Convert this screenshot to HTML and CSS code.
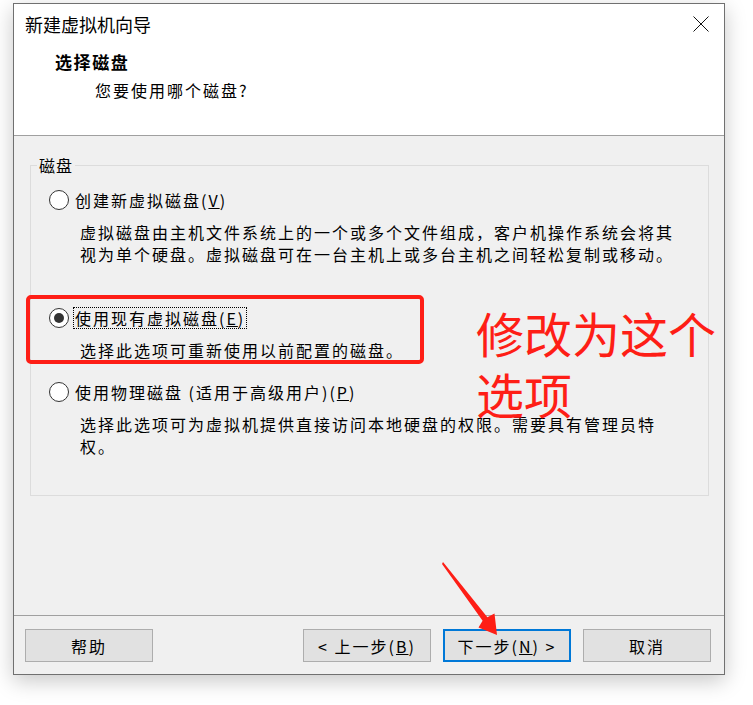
FILE: index.html
```html
<!DOCTYPE html>
<html lang="zh-CN">
<head>
<meta charset="utf-8">
<title>新建虚拟机向导</title>
<link rel="stylesheet" href="styles.css">
</head>
<body>
<div class="window">
  <header class="header">
    <div class="titlebar">
      <span class="title">新建虚拟机向导</span>
      <svg class="close" width="16" height="16" viewBox="0 0 16 16"><path d="M0.5 0.5L15.5 15.5M15.5 0.5L0.5 15.5" stroke="#111" stroke-width="1" fill="none"/></svg>
    </div>
    <div class="heading">选择磁盘</div>
    <div class="subheading">您要使用哪个磁盘?</div>
  </header>
  <main class="content">
    <fieldset class="group">
      <legend>磁盘</legend>
      <div class="option">
        <div class="row"><span class="radio"></span><span class="label">创建新虚拟磁盘(<u>V</u>)</span></div>
        <p class="desc">虚拟磁盘由主机文件系统上的一个或多个文件组成，客户机操作系统会将其视为单个硬盘。虚拟磁盘可在一台主机上或多台主机之间轻松复制或移动。</p>
      </div>
      <div class="option option-second">
        <div class="row"><span class="radio checked"></span><span class="label focused">使用现有虚拟磁盘(<u>E</u>)</span></div>
        <p class="desc">选择此选项可重新使用以前配置的磁盘。</p>
      </div>
      <div class="option option-third">
        <div class="row"><span class="radio"></span><span class="label">使用物理磁盘 (适用于高级用户)(<u>P</u>)</span></div>
        <p class="desc">选择此选项可为虚拟机提供直接访问本地硬盘的权限。需要具有管理员特权。</p>
      </div>
    </fieldset>
  </main>
  <footer class="footer">
    <button class="btn">帮助</button>
    <div class="nav">
      <button class="btn">&lt; 上一步(<u>B</u>)</button>
      <button class="btn btn-default">下一步(<u>N</u>) &gt;</button>
      <button class="btn">取消</button>
    </div>
  </footer>
</div>

<div class="mark-box"></div>
<div class="mark-text">修改为这个选项</div>
<svg class="mark-arrow" width="64" height="82" viewBox="0 0 64 82">
  <polygon points="5,4 49.4,59.2 56.5,55.5 59,77 40.5,69.5 44.6,62.8 4,6" fill="#fe1e16"/>
</svg>
</body>
</html>
```

FILE: styles.css
```css
html, body {
  margin: 0;
  padding: 0;
  background: #ffffff;
}

body {
  position: relative;
  width: 753px;
  height: 705px;
  overflow: hidden;
  font-family: "Noto Sans CJK SC", "Noto Sans", sans-serif;
  color: #000;
}

.window {
  box-sizing: border-box;
  margin: 3px 0 0 13px;
  width: 712px;
  height: 672px;
  border: 1px solid #707070;
  background: #f0f0f0;
  display: flex;
  flex-direction: column;
  box-shadow: 0 6px 20px rgba(0, 0, 0, 0.22);
}

/* header */
.header {
  height: 131px;
  flex: none;
  background: #ffffff;
  border-bottom: 1px solid #a0a0a0;
}

.titlebar {
  display: flex;
  align-items: center;
  justify-content: space-between;
  height: 24px;
  padding: 8px 15px 0 11px;
}

.title {
  font-size: 18px;
  line-height: 24px;
}

.close {
  display: block;
}

.heading {
  margin: 15px 0 0 41px;
  font-size: 17px;
  font-weight: bold;
  letter-spacing: 1.6px;
  line-height: 22px;
}

.subheading {
  margin: 6px 0 0 81px;
  font-size: 16px;
  letter-spacing: 2px;
  line-height: 22px;
}

/* content */
.content {
  flex: 1;
  min-height: 0;
}

.group {
  margin: 19px 15px 0 16px;
  padding: 14px 12px 38px 6px;
  border: 1px solid #dcdcdc;
  min-width: 0;
}

.group legend {
  padding: 0 2px;
  font-size: 16px;
  letter-spacing: 1px;
  line-height: 20px;
}

.option {
  margin-left: 12px;
}

.option-second {
  margin-top: 42px;
}

.option-third {
  margin-top: 20px;
}

.row {
  display: flex;
  align-items: center;
  height: 22px;
}

.radio {
  box-sizing: border-box;
  width: 20px;
  height: 20px;
  flex: none;
  border: 1px solid #333;
  border-radius: 50%;
  background: #fff;
  display: grid;
  place-items: center;
}

.radio.checked::after {
  content: "";
  width: 10px;
  height: 10px;
  border-radius: 50%;
  background: #333;
}

.label {
  margin-left: 4px;
  padding: 0 1px;
  border: 1px dotted transparent;
  font-size: 16px;
  letter-spacing: 2px;
  line-height: 20px;
}

.label.focused {
  border-color: #000;
}

.desc {
  margin: 10px 0 0 31px;
  max-width: 600px;
  font-size: 16px;
  letter-spacing: 2px;
  line-height: 22px;
}

/* footer */
.footer {
  flex: none;
  display: flex;
  justify-content: space-between;
  border-top: 1px solid #a0a0a0;
  padding: 13px 13px 12px 11px;
}

.nav {
  display: flex;
  gap: 12px;
}

.btn {
  box-sizing: border-box;
  width: 128px;
  height: 33px;
  margin: 0;
  padding: 0;
  background: #e1e1e1;
  border: 1px solid #adadad;
  font-family: inherit;
  font-size: 16px;
  letter-spacing: 2px;
  color: #000;
  line-height: 20px;
}

.btn-default {
  border: 2px solid #0078d7;
}

/* annotations */
.mark-box {
  position: absolute;
  left: 26px;
  top: 295px;
  width: 398px;
  height: 69px;
  box-sizing: border-box;
  border: 4px solid #fe1e16;
  border-radius: 5px;
}

.mark-text {
  position: absolute;
  left: 476px;
  top: 302px;
  width: 250px;
  font-size: 48px;
  line-height: 61px;
  color: #fe1e16;
}

.mark-arrow {
  position: absolute;
  left: 438px;
  top: 558px;
}
```
